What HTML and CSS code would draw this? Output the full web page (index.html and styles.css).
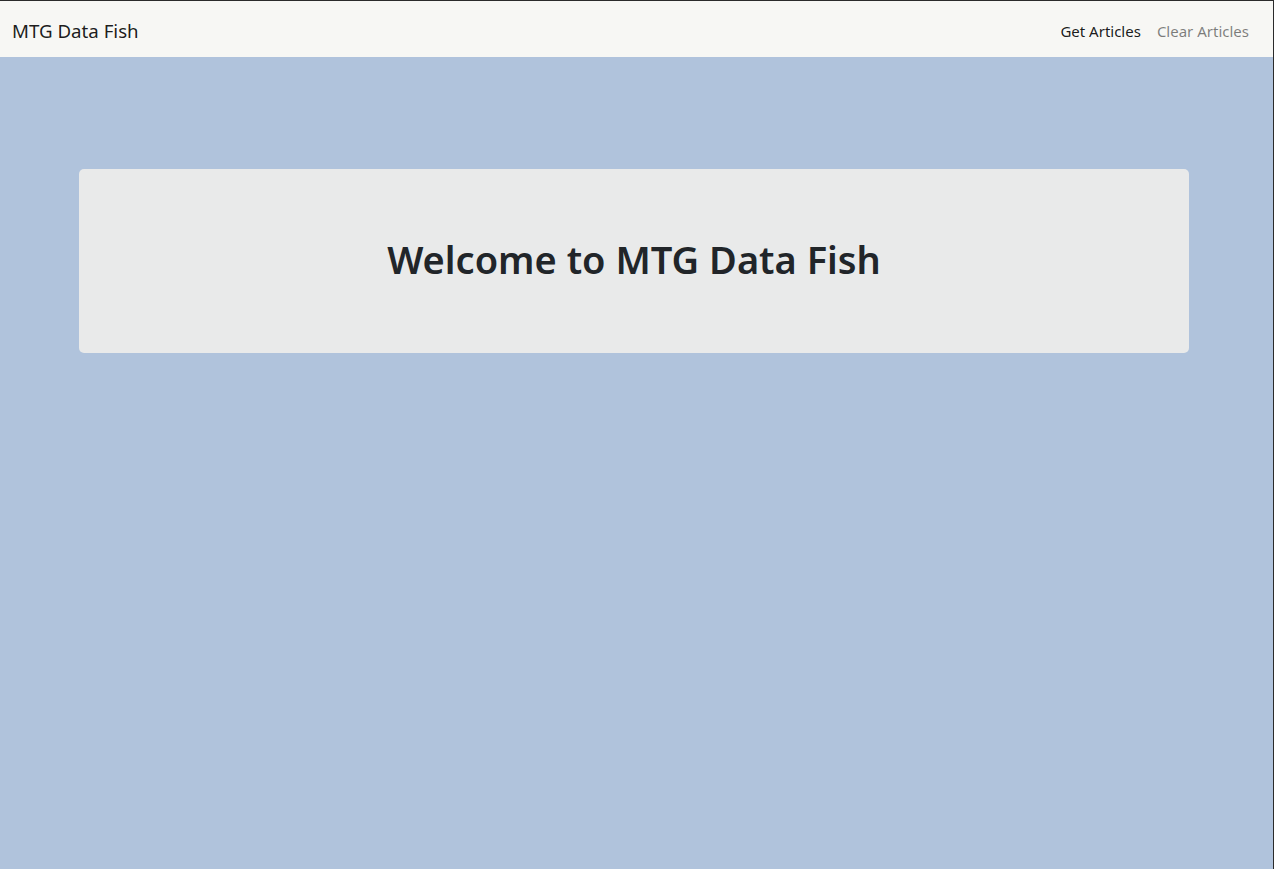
FILE: index.html
```
<!DOCTYPE html>
<html lang="en">
<head>
<meta charset="utf-8">
<title>MTG Data Fish</title>
<link rel="stylesheet" href="styles.css">
</head>
<body>
<div class="frame">
  <nav class="navbar">
    <a class="brand" href="#">MTG Data Fish</a>
    <ul class="nav">
      <li><a class="nav-link active" href="#">Get Articles</a></li>
      <li><a class="nav-link" href="#">Clear Articles</a></li>
    </ul>
  </nav>
  <main class="container">
    <section class="jumbotron">
      <h1>Welcome to MTG Data Fish</h1>
    </section>
  </main>
</div>
</body>
</html>
```
FILE: styles.css
```
* { box-sizing: border-box; }
html, body { margin: 0; height: 100%; }
body {
  font-family: "Noto Sans", "Open Sans", sans-serif;
  color: #212529;
  background: #b0c3dc;
  line-height: 1.5;
}
.frame {
  min-height: 100%;
  border-top: 1px solid #2b2b2b;
  border-right: 1px solid #2b2b2b;
}
.navbar {
  display: flex;
  align-items: center;
  justify-content: space-between;
  background: #f7f7f4;
  padding: 10px 16px 6px 12px;
  height: 56px;
}
.brand {
  font-size: 18.7px;
  color: rgba(0,0,0,.9);
  text-decoration: none;
  line-height: 30px;
}
.nav { list-style: none; margin: 0; padding: 0; display: flex; }
.nav-link {
  display: block;
  padding: 8px;
  font-size: 15px;
  color: rgba(0,0,0,.5);
  text-decoration: none;
}
.nav-link.active { color: rgba(0,0,0,.9); }
.container {
  width: 1110px;
  margin: 112px 0 0 79px;
}
.jumbotron {
  background: #e9eaea;
  border-radius: 5px;
  padding: 66px 32px 62px;
  text-align: center;
}
h1 {
  margin: 0 0 8px;
  font-size: 38px;
  font-weight: 600;
  line-height: 48px;
}
```
